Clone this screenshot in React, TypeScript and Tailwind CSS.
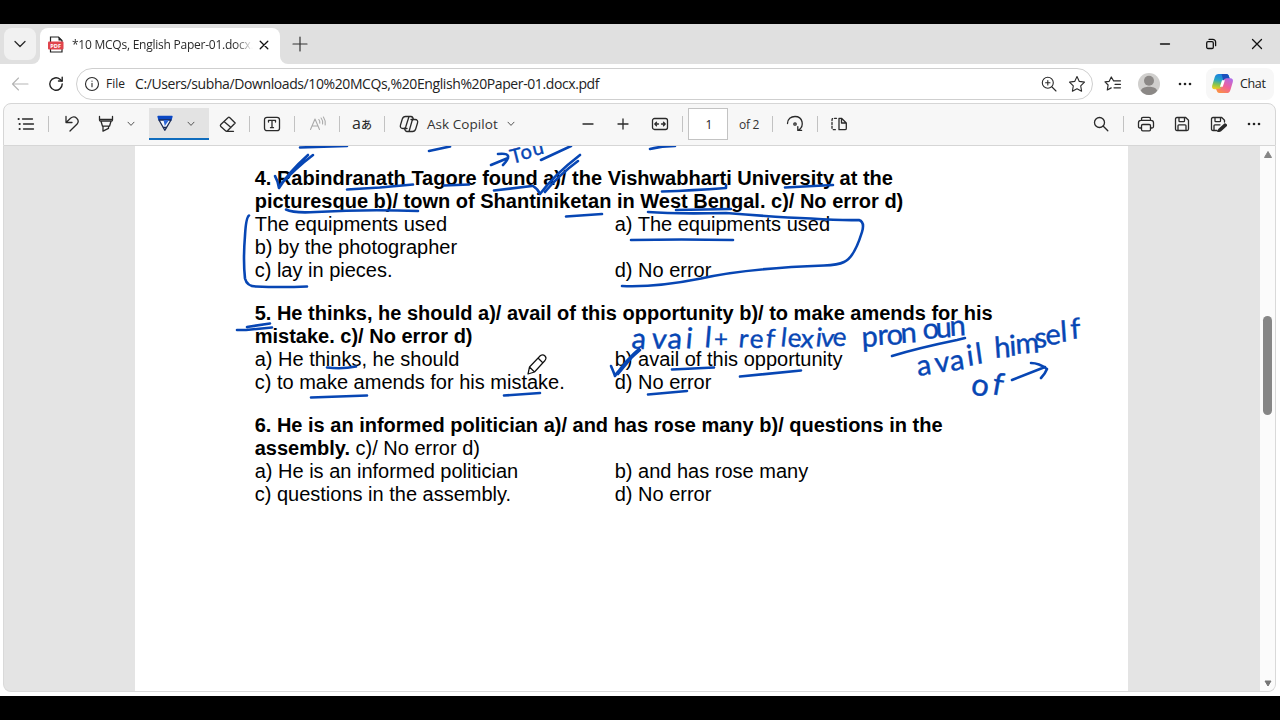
import type { ReactNode } from "react";

type IconProps = { w?: number; h?: number; children: ReactNode; sw?: number; color?: string };

function Icon({ w = 18, h = 18, children, sw = 1.3, color = "#2a2a2a" }: IconProps) {
  return (
    <svg
      width={w}
      height={h}
      viewBox={`0 0 ${w} ${h}`}
      fill="none"
      stroke={color}
      strokeWidth={sw}
      strokeLinecap="round"
      strokeLinejoin="round"
      className="shrink-0"
    >
      {children}
    </svg>
  );
}

function Slot({ className, children }: { className: string; children: ReactNode }) {
  return <div className={`flex h-full shrink-0 items-center justify-center ${className}`}>{children}</div>;
}

function Sep({ className = "" }: { className?: string }) {
  return <div className={`h-4 w-px shrink-0 bg-[#c2c2c2] ${className}`} />;
}

function Chevron() {
  return (
    <Icon w={8} h={6} sw={1} color="#555">
      <path d="M1 1.2 4 4.4 7 1.2" />
    </Icon>
  );
}

function Dots() {
  return (
    <Icon w={14} h={4} color="none">
      <g fill="#222">
        <circle cx="2" cy="2" r="1.3" />
        <circle cx="7" cy="2" r="1.3" />
        <circle cx="12" cy="2" r="1.3" />
      </g>
    </Icon>
  );
}

function TabStrip() {
  return (
    <div className="flex h-10 shrink-0 bg-white">
      <div className="flex w-10 rounded-br-lg bg-[#e0e0e0] pt-1 pl-1">
        <button className="flex h-8 w-8 items-center justify-center rounded-lg bg-[#f1f1f1]">
          <Icon w={12} h={8} sw={1.3}>
            <path d="M1 1.500 6 6.500 11 1.500" />
          </Icon>
        </button>
      </div>
      <div className="flex w-[240px] bg-[#e0e0e0] pt-1">
        <div className="flex w-full items-center rounded-t-lg bg-white pb-[3px] pl-2">
          <svg width="16" height="17" viewBox="0 0 16 17" className="shrink-0">
            <path d="M2.500 1h8l3.500 3.500V16H2.500z" fill="#fff" stroke="#222" strokeWidth="1.2" />
            <path d="M10.500 1v3.500H14z" fill="#222" />
            <rect x="0" y="5.500" width="15.500" height="8" rx="1" fill="#e0444c" />
            <text x="7.700" y="11.700" fontSize="5.600" fontWeight="700" fill="#fff" textAnchor="middle" fontFamily="Open Sans">
              PDF
            </text>
          </svg>
          <div className="ml-2 w-[181px] overflow-hidden text-[12px] tracking-[-0.240px] whitespace-nowrap text-[#2a2a2a] [mask-image:linear-gradient(to_right,black_90%,transparent)]">
            *10 MCQs, English Paper-01.docx.pdf
          </div>
          <div className="ml-[6px]">
            <Icon w={10} h={10} sw={1.3} color="#111">
              <path d="m1.200 1.200 7.600 7.600m0-7.600L1.200 8.800" />
            </Icon>
          </div>
        </div>
      </div>
      <div className="flex flex-1 items-center rounded-bl-lg bg-[#e0e0e0] pl-[12px]">
        <Icon w={16} h={16} sw={1.2} color="#333">
          <path d="M8 1v14M1 8h14" />
        </Icon>
        <div className="flex-1" />
        <Slot className="w-[46px]">
          <Icon w={12} h={10} color="#111">
            <path d="M1.500 5h9" />
          </Icon>
        </Slot>
        <Slot className="w-[46px]">
          <Icon w={12} h={12} color="#111">
            <rect x="1.700" y="3.700" width="6.600" height="6.800" rx="1.300" />
            <path d="M4 1.300h3.800a2.800 2.800 0 0 1 2.800 2.800v3.600" />
          </Icon>
        </Slot>
        <Slot className="w-[46px]">
          <Icon w={12} h={12} color="#111">
            <path d="m1.500 1.500 9 9m0-9-9 9" />
          </Icon>
        </Slot>
      </div>
    </div>
  );
}

function CopilotLogo() {
  return (
    <svg width="23" height="21" viewBox="0 0 24 22" className="shrink-0">
      <defs>
        <linearGradient id="cpa" x1="0.400" y1="0" x2="0.200" y2="1">
          <stop offset="0" stopColor="#1a7fe0" />
          <stop offset="0.400" stopColor="#27a5c4" />
          <stop offset="0.700" stopColor="#8bc44c" />
          <stop offset="1" stopColor="#f5cf1d" />
        </linearGradient>
        <linearGradient id="cpb" x1="0.800" y1="0" x2="0.200" y2="1">
          <stop offset="0" stopColor="#b06be8" />
          <stop offset="0.500" stopColor="#f0609a" />
          <stop offset="1" stopColor="#fb9340" />
        </linearGradient>
      </defs>
      <path d="M12 1h4c1.700 0 2.400 1.200 2.900 2.800L19.600 6h-3.400c-1.600 0-2.300.8-2.800 2.300l-1.800 5.600C11 16 10 17 8 17H3.800C1.500 17 .6 15.200 1.200 13L3.900 4.200C4.600 2 5.700 1 8 1z" fill="url(#cpa)" />
      <path d="M11 1h5c1.700 0 2.400 1.200 2.900 2.800L19.600 6h-3.400l-3.500 1.500z" fill="#1c50bd" />
      <path d="M13 21H8.800C7 21 6.300 19.800 5.800 18.200L5.200 16.500h3c1.600 0 2.400-1 2.900-2.500l1.800-5.700C13.500 6.500 14.600 5.500 16.500 5.500h3.700c2.300 0 3.200 1.700 2.600 3.800L20.300 17.700C19.500 20 18.500 21 16 21z" fill="url(#cpb)" />
      <path d="M11.500 7.500h3L12.300 14.500H9.300z" fill="#fff" />
    </svg>
  );
}

function AddressRow() {
  return (
    <div className="flex h-[39px] shrink-0 items-center bg-white">
      <Slot className="w-10">
        <Icon w={18} h={14} sw={1.1} color="#b5b5b5">
          <path d="M7.500 1 1.500 7l6 6M1.500 7H17" />
        </Icon>
      </Slot>
      <Slot className="w-8">
        <Icon w={16} h={16} sw={1.4} color="#222">
          <path d="M14.200 8A6.200 6.200 0 1 1 12 3.300l2 1.700" />
          <path d="M14.200 1.300V5h-3.700" />
        </Icon>
      </Slot>
      <div className="ml-[4px] flex h-8 w-[1017px] items-center rounded-full border border-[#cfcfcf] bg-white pl-[7px] text-[#222]">
        <Icon w={16} h={16} sw={1.1}>
          <circle cx="8" cy="8" r="6.500" />
          <path d="M8 7.300v3.500M8 5v.3" />
        </Icon>
        <span className="ml-[6px] w-[21px] text-[12px]">File</span>
        <span className="ml-2 text-[14px] tracking-[-0.400px] whitespace-nowrap">
          C:/Users/subha/Downloads/10%20MCQs,%20English%20Paper-01.docx.pdf
        </span>
        <div className="flex-1" />
        <Slot className="w-7">
          <Icon w={16} h={16} sw={1.1}>
            <circle cx="6.800" cy="6.800" r="5.500" />
            <path d="m11 11 4 4M6.800 4.600V9M4.600 6.800H9" />
          </Icon>
        </Slot>
        <Slot className="mr-[1px] w-7">
          <Icon w={18} h={18} sw={1.1}>
            <path d="m9 1.500 2.300 4.900 5.200.7-3.800 3.700.9 5.400L9 13.700l-4.600 2.500.9-5.400L1.500 7.100l5.200-.7z" />
          </Icon>
        </Slot>
      </div>
      <Slot className="ml-[2px] w-9">
        <Icon w={18} h={16} sw={1.2}>
          <path d="M9.500 4.800 7.300 1 5.200 5.300l-4.200.6 3.100 3.100-.8 5 3.900-2.100M9.500 4.800h7M11 8.300h5.500M10 11.800h6.500" />
        </Icon>
      </Slot>
      <Slot className="w-9">
        <svg width="22" height="22" viewBox="0 0 22 22">
          <circle cx="11" cy="11" r="11" fill="#d0cfcd" />
          <circle cx="11" cy="7.800" r="5" fill="#8b8886" />
          <path d="M2.800 17.500c1.500-3 4.600-3.700 8.200-3.700s6.700.7 8.200 3.700C17.500 20.300 14.500 22 11 22s-6.500-1.700-8.200-4.500z" fill="#8b8886" />
        </svg>
      </Slot>
      <Slot className="w-9">
        <Dots />
      </Slot>
      <div className="ml-[3px] flex h-8 w-[68px] items-center rounded-lg bg-[#f7f7f7] pl-[5px]">
        <CopilotLogo />
        <span className="ml-[6px] pt-[2px] text-[12.500px] tracking-[-0.350px] text-[#222]">Chat</span>
      </div>
    </div>
  );
}

function Toolbar() {
  return (
    <div className="mr-1 ml-[3px] flex h-[43px] shrink-0 items-center rounded-t-lg border border-[#d6d6d6] bg-[#f7f7f7] pb-[1px]">
      <Slot className="w-11">
        <Icon w={18} h={14}>
          <path d="M5.500 2H15.500M6.500 7H16.500M6.500 12H16.500" />
          <path d="M1.500 2h.3M2.500 7h.3M2.500 12h.3" strokeWidth="1.900" />
        </Icon>
      </Slot>
      <Sep />
      <Slot className="w-[46px]">
        <Icon w={16} h={18}>
          <path d="M2 1.500V7.500H8M2.300 7.200 6.500 3.300c4.500-3.600 9.800 1.500 6.600 5.700L6 16" />
        </Icon>
      </Slot>
      <Slot className="w-[22px]">
        <Icon w={16} h={18}>
          <path d="M1.500 1.500V5q0 1 1 1h11q1 0 1-1V1.500M1.500 4.300h13M3 6.200l1.500 5h7l1.500-5M5 11.200v5l5.500-2.800v-2.200" />
        </Icon>
      </Slot>
      <Slot className="w-7">
        <Chevron />
      </Slot>
      <div className="ml-1 flex h-[32px] w-[60px] items-center border-b-2 border-[#0f6cbd] bg-[#e3e3e3] pt-[1px]">
        <Slot className="w-8">
          <Icon w={16} h={17} color="#1b2b55">
            <path d="M1 1.500h14l-1 3.500H2z" fill="#0a47c4" stroke="#0a47c4" />
            <path d="M2 5 7.800 15.300 14 5z" fill="#f4f8ff" />
            <path d="M6.500 12.500h2.800" />
            <path d="m6.500 5 1.300 6L12 5z" fill="#2c66d8" stroke="none" />
          </Icon>
        </Slot>
        <Slot className="w-5">
          <Chevron />
        </Slot>
      </div>
      <Slot className="w-[37px]">
        <Icon w={18} h={17}>
          <path d="M10.600 1.500 16.200 7 8.500 14.800q-1 .9-2 0L1.800 10.500q-.9-1 0-2L9.200 1.500q.7-.7 1.400 0zM5 5.600l7 6M8 15.300h6.500" />
        </Icon>
      </Slot>
      <Sep className="ml-[3px]" />
      <Slot className="w-11">
        <Icon w={18} h={16}>
          <rect x="1.500" y="1.300" width="15" height="13.400" rx="2.500" />
          <path d="M5.500 6V4.300h7V6M9 4.300v7.400M7.500 11.700h3" />
        </Icon>
      </Slot>
      <Sep className="mr-[1px]" />
      <Slot className="w-[43px]">
        <Icon w={18} h={16} sw={1.1} color="#aaaaaa">
          <path d="M1.500 13.500 6 3l4.500 10.500M3 10h6M9.800 3.500q1.300 1.500 1 3.600M12.100 2q2 2.500 1.500 6M14.400 1q2.400 3.500 1.800 8" />
        </Icon>
      </Slot>
      <Sep />
      <Slot className="w-11">
        <span className="flex items-baseline pb-[2px] text-[16px] text-[#2a2a2a]">
          a<span className="font-['Noto_Sans_CJK_JP'] text-[11px] font-medium">あ</span>
        </span>
      </Slot>
      <Sep />
      <Slot className="ml-[6px] w-9">
        <Icon w={20} h={18}>
          <path d="M8 13.500H4C1.700 13.500.9 12 1.500 10L3.300 4C3.900 2 5 1.500 6.500 1.500H12c1.500 0 2 1 2.500 3M12 4.500h4c2.300 0 3.100 1.500 2.500 3.500L16.700 14c-.6 2-1.700 2.500-3.200 2.500H8c-1.500 0-2-1-2.500-3M10 1.500 6.700 12C6.300 13 6 13.500 5 13.500M14.800 4.500c-1 0-1.500.5-1.800 1.500L10 16.500" />
        </Icon>
      </Slot>
      <span className="w-[71px] pt-[1px] text-[13.500px] tracking-[0.050px] whitespace-nowrap text-[#333]">Ask Copilot</span>
      <Slot className="w-[26px]">
        <Chevron />
      </Slot>
      <Slot className="ml-[47px] w-[34px]">
        <Icon w={12} h={12}>
          <path d="M1 6h10" />
        </Icon>
      </Slot>
      <Slot className="w-9">
        <Icon w={12} h={12}>
          <path d="M1 6h10M6 1v10" />
        </Icon>
      </Slot>
      <Slot className="w-[38px]">
        <Icon w={18} h={14}>
          <rect x="1.500" y="1.500" width="15" height="11" rx="2" />
          <path d="M7.500 7H4m1.500-1.700L3.800 7l1.700 1.700M10.500 7H14m-1.500-1.700L14.200 7l-1.700 1.700" />
        </Icon>
      </Slot>
      <Sep className="ml-[3px]" />
      <div className="ml-[5px] flex h-8 w-10 items-center justify-center border border-[#c3c3c3] bg-white pt-[1px] pl-[2px] text-[12px] text-[#222]">1</div>
      <span className="ml-[11px] w-[22px] pt-[1px] text-[12px] tracking-[-0.300px] whitespace-nowrap text-[#333]">of 2</span>
      <Sep className="ml-[11px]" />
      <Slot className="w-11">
        <Icon w={18} h={18}>
          <path d="M1.500 8.500C1.500 4 5 1.500 9 1.500c8 0 9.500 9.500 3.800 13.500M11.800 11.600v3.800h3.800" />
          <circle cx="9" cy="9" r="1.200" />
        </Icon>
      </Slot>
      <Sep />
      <Slot className="w-[42px]">
        <Icon w={18} h={16}>
          <path d="M9 2.300V13.700h6q1.300 0 1.300-1.300V7L11.500 2.300zM11.500 2.300V7h4.800" />
          <path d="M6.500 2.300H3.800Q2 2.300 2 4v8q0 1.700 1.800 1.700h2.700" strokeDasharray="2 1.800" />
        </Icon>
      </Slot>
      <div className="flex-1" />
      <Slot className="w-11">
        <Icon w={16} h={16}>
          <circle cx="6.500" cy="6.500" r="5" />
          <path d="m10.300 10.300 4.500 4.500" />
        </Icon>
      </Slot>
      <Sep />
      <Slot className="ml-1 w-9">
        <Icon w={18} h={16}>
          <path d="M4.500 4V3q0-1.700 1.500-1.700h6q1.500 0 1.500 1.700v1M4.500 12H3q-1.500 0-1.500-1.500V6.800Q1.500 4.300 4 4.300h10q2.500 0 2.500 2.500v3.700Q16.500 12 15 12h-1.500" />
          <rect x="4.500" y="8.500" width="9" height="6.300" rx="1.300" />
        </Icon>
      </Slot>
      <Slot className="w-9">
        <Icon w={16} h={16}>
          <path d="M3 1.500h8.700l2.800 2.800V13q0 1.500-1.500 1.500H3q-1.500 0-1.500-1.500V3q0-1.500 1.500-1.500zM5 1.500V5q0 .7.700.7h4q.8 0 .8-.7V1.500M4 14.500V9.700q0-.9.900-.9h6.200q.9 0 .9.900v4.800" />
        </Icon>
      </Slot>
      <Slot className="w-9">
        <Icon w={17} h={16}>
          <path d="M7 14.500H3q-1.500 0-1.500-1.500V3q0-1.500 1.500-1.500h8.700l2.800 2.800V6M5 1.500V5q0 .7.700.7h4q.8 0 .8-.7V1.500M4 14.500V9.700q0-.9.900-.9H10" />
          <path d="m15 8.200-5.800 5.300-1 1.800 2.300-.8 5.800-5.200z" strokeWidth="2" fill="#222" />
        </Icon>
      </Slot>
      <Slot className="mr-[3px] w-9">
        <Dots />
      </Slot>
    </div>
  );
}

function Pair({ left, right }: { left: string; right?: string }) {
  return (
    <div className="flex">
      <span className="w-[360px]">{left}</span>
      <span>{right}</span>
    </div>
  );
}

type Glyphs = { text: string; x: string; y: string; size: number; rotate?: number };

const notes: Glyphs[] = [
  { text: "Tou", x: "512 522 534", y: "164 160 156", size: 20, rotate: -14 },
  { text: "avail", x: "631 651 667 685 704", y: "348 348 348 348 347", size: 29, rotate: 5 },
  { text: "+", x: "714", y: "347", size: 24 },
  { text: "reflexive", x: "738 749 765 780 787 800 815 820 832", y: "347 347 347 346 346 347 346 346 345", size: 26, rotate: 6 },
  { text: "pronoun", x: "862 878 887 901 923 936 950", y: "347 345 345 343 339 338 336", size: 29, rotate: -3 },
  { text: "avail", x: "918 936 951 968 977", y: "376 373 371 366 364", size: 29, rotate: -8 },
  { text: "himself", x: "995 1010 1016 1035 1046 1061 1071", y: "358 356 354 348 345 342 339", size: 29, rotate: -4 },
  { text: "of", x: "970 991", y: "394 394", size: 31, rotate: 10 },
];

const strokes: string[] = [
  "M300 147.500 347 146",
  "M429 151 450 146.500",
  "M541 160 571 146",
  "M650 149q12-3 25-3",
  "M491 165 508 158M498 154q9-1 10 2t-5 9",
  "M275 176q3 5 4 12 9-15 29-33M281 184q15-16 32-29",
  "M347 189.500 380 187.500M380 187.500 413 184.500M444 185.500 469 184.500",
  "M494 190.500 532 186M533 186q5 3 7 8 14-19 40-39M545 192q14-17 33-31",
  "M662 191.500q30-1 64-3.500v-3M785 187.500 833 185",
  "M286 209.500q8 4 30 2.500 50-3 102-1",
  "M566 216.500 602 214M676 210 731 209",
  "M249 215.500q-3 2-4 20-2 25 0 43 2 8 11 8 25 1 51 0",
  "M648 212q25 2 78 1 50 4 85 5.500 30 2 48 1.500 6 2 3 12-8 26-18 30-6 3-20 3.500-80 3-123 13-45 9-79 7.500",
  "M631 240q50-1 102 0",
  "M237 330 246 330 272 327.500M247 327 270 323.500",
  "M327 367.500q15 2 29-1M311 397.500q28-1 56-2M504 395.500 540 393",
  "M611 366q3 7 4 10 12-17 24-27M616 374q10-12 24-24M618 374 638 350",
  "M672 369.500q22-1 42-2M740 376.500q30-3 61-6M648 394.500 687 391",
  "M892 356q26-8 65-16l8-2",
  "M1012 380 1045 367M1031 363q8 0 16 6-2 5-6 9",
];

function Ink() {
  return (
    <svg className="pointer-events-none absolute inset-0" width="1256" height="546" viewBox="4 146 1256 546">
      <g fill="none" stroke="#0746b4" strokeWidth="2.600" strokeLinecap="round" strokeLinejoin="round">
        {strokes.map((d) => (
          <path key={d} d={d} />
        ))}
      </g>
      <g fill="#0746b4" stroke="#0746b4" strokeWidth="0.400" fontFamily="Lato, sans-serif">
        {notes.map((n, i) => (
          <text key={i} x={n.x} y={n.y} fontSize={n.size} rotate={n.rotate ?? 0}>
            {n.text}
          </text>
        ))}
      </g>
      <path d="m528 374 1.500-7 11-11.500q2.500-1.500 4.500.5t0 4.500L534.500 372zM538 358l4.500 4.500M529.500 367l5 5" fill="#fff" stroke="#111" strokeWidth="1.200" strokeLinejoin="round" />
    </svg>
  );
}

function Viewer() {
  return (
    <div className="mr-1 ml-[3px] flex h-[546px] shrink-0 overflow-hidden rounded-b-lg border-r border-b border-l border-[#d9d9d9] bg-[#e4e4e4]">
      <div className="relative flex flex-1 overflow-hidden">
        <div className="ml-[131px] flex w-[993px] flex-col gap-[19.500px] bg-white pt-[20.500px] pl-[119.700px] font-['Liberation_Sans',sans-serif] text-[20px] leading-[23.150px] whitespace-nowrap text-black">
          <section>
            <p className="font-bold">4. Rabindranath Tagore found a)/ the Vishwabharti University at the</p>
            <p className="font-bold">picturesque b)/ town of Shantiniketan in West Bengal. c)/ No error d)</p>
            <Pair left="The equipments used" right="a) The equipments used" />
            <Pair left="b) by the photographer" />
            <Pair left="c) lay in pieces." right="d) No error" />
          </section>
          <section>
            <p className="font-bold">5. He thinks, he should a)/ avail of this opportunity b)/ to make amends for his</p>
            <p className="font-bold">mistake. c)/ No error d)</p>
            <Pair left="a) He thinks, he should" right="b) avail of this opportunity" />
            <Pair left="c) to make amends for his mistake." right="d) No error" />
          </section>
          <section>
            <p className="font-bold">6. He is an informed politician a)/ and has rose many b)/ questions in the</p>
            <p>
              <b>assembly.</b> c)/ No error d)
            </p>
            <Pair left="a) He is an informed politician" right="b) and has rose many" />
            <Pair left="c) questions in the assembly." right="d) No error" />
          </section>
        </div>
        <Ink />
      </div>
      <div className="flex w-[15px] flex-col items-center justify-between bg-[#fbfbfb] pt-[5px] pb-1">
        <svg width="8" height="7" viewBox="0 0 8 7">
          <path d="M4 .5 7.500 6.500H.5z" fill="#858585" stroke="#858585" strokeLinejoin="round" />
        </svg>
        <div className="mt-[-107px] h-[99px] w-[9px] rounded-full bg-[#868686]" />
        <svg width="8" height="7" viewBox="0 0 8 7">
          <path d="M4 6 7 1H1z" fill="#757575" stroke="#757575" strokeLinejoin="round" />
        </svg>
      </div>
    </div>
  );
}

export default function App() {
  return (
    <div className="flex h-[720px] w-[1280px] flex-col overflow-hidden bg-black pt-6 font-['Open_Sans','Noto_Sans',sans-serif]">
      <div className="flex h-[672px] flex-col bg-white">
        <TabStrip />
        <AddressRow />
        <Toolbar />
        <Viewer />
      </div>
    </div>
  );
}
